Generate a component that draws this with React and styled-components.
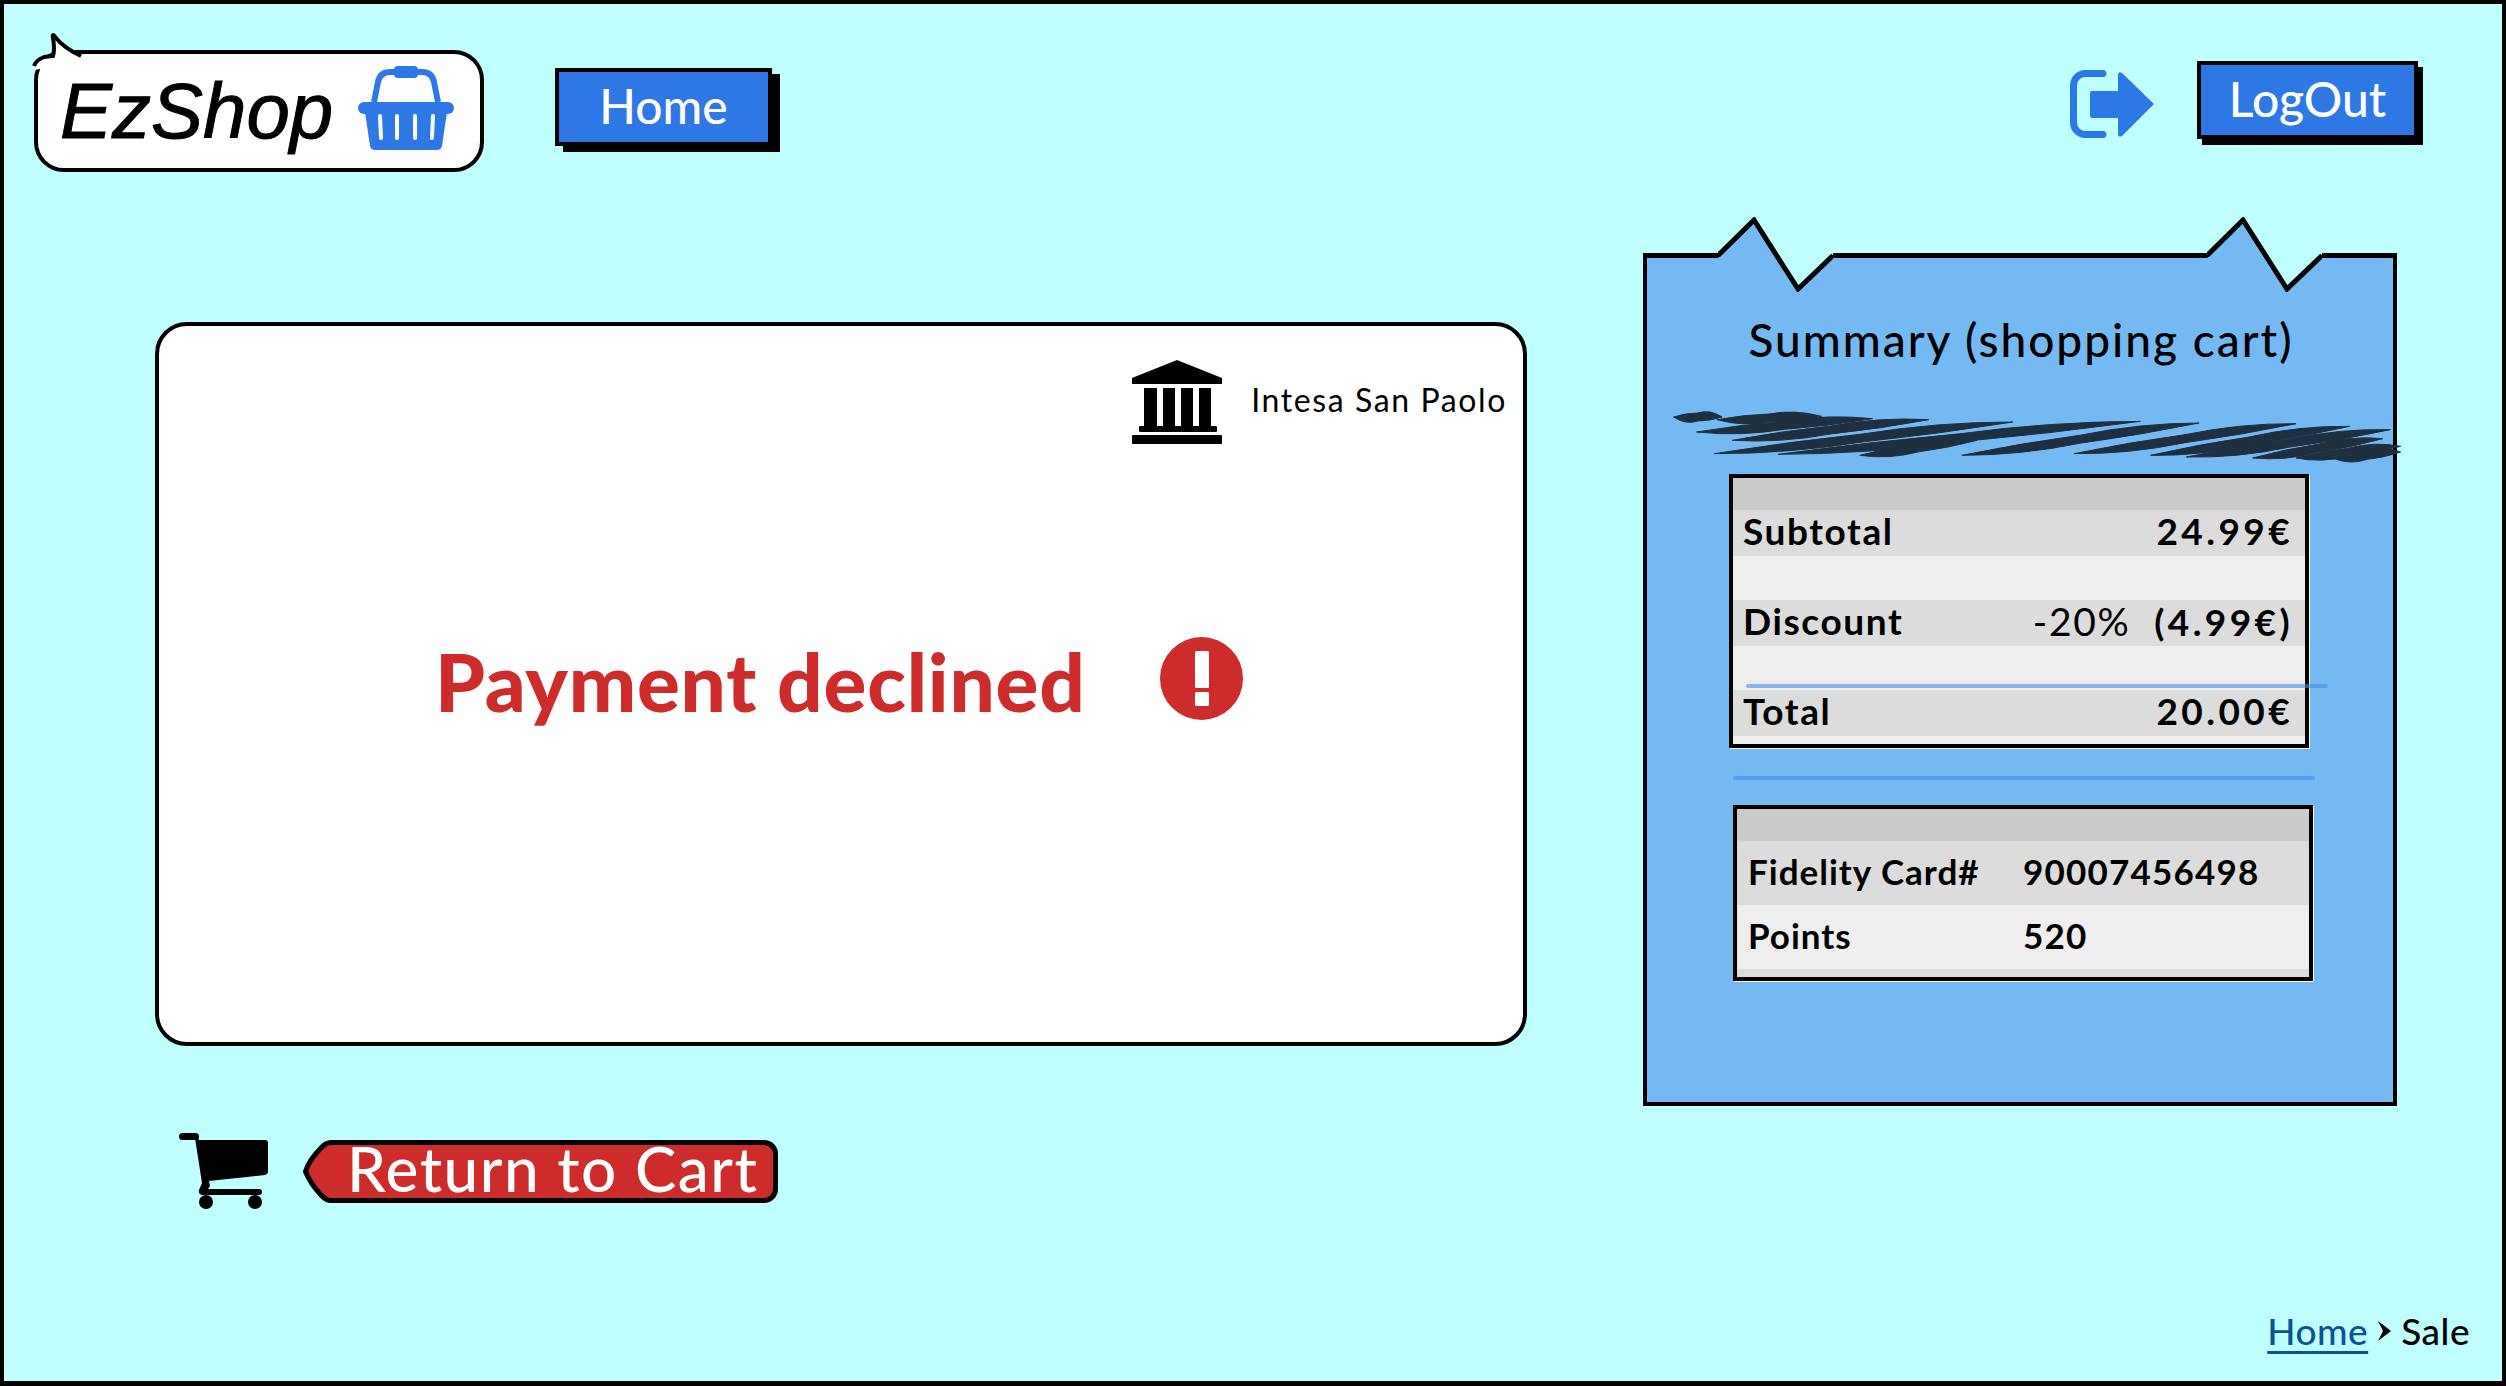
import React from "react";
import styled, { createGlobalStyle } from "styled-components";

const FONT = `Lato, "Noto Sans", sans-serif`;

const Global = createGlobalStyle`
  html, body { margin: 0; padding: 0; background: #fff; }
  body { font-family: ${FONT}; }
  * { box-sizing: border-box; }
`;

const Frame = styled.div`
  width: 2506px;
  height: 1386px;
  background: #bfffff;
  border: solid #000;
  border-width: 4px 4px 5px 4px;
  display: flex;
  flex-direction: column;
  color: #000;
`;

const TopBar = styled.header`
  display: flex;
  align-items: flex-start;
  padding: 46px 84px 0 30px;
`;

const LogoBubble = styled.div`
  position: relative;
  width: 450px;
  height: 122px;
  background: #fff;
  border: 4px solid #000;
  border-radius: 30px;
  display: flex;
  align-items: flex-start;
  padding: 12px 0 0 22px;
`;

const LogoTail = styled.svg`
  position: absolute;
  left: -6px;
  top: -24px;
`;

const LogoText = styled.span`
  font-family: "Liberation Sans", Arial, sans-serif;
  font-style: italic;
  font-size: 78px;
  line-height: 90px;
  width: 298px;
  -webkit-text-stroke: 1px #000;
`;

const BlockButton = styled.button`
  font-family: ${FONT};
  width: ${(p) => p.$w}px;
  height: ${(p) => p.$h}px;
  margin-top: ${(p) => p.$top}px;
  margin-left: ${(p) => p.$left}px;
  background: #2d78e4;
  color: #fff;
  font-size: 48px;
  font-weight: 500;
  line-height: 1;
  border: 4px solid #000;
  box-shadow: ${(p) => p.$shadow}px 6px 0 #000;
  padding: 0 0 3px;
`;

const Spacer = styled.div`
  flex: 1;
`;

const LogoutIcon = styled.svg`
  margin-top: 20px;
  margin-right: 43px;
`;

const Content = styled.main`
  display: flex;
  align-items: flex-start;
  gap: 116px;
  padding-left: 151px;
  margin-top: 81px;
`;

const LeftColumn = styled.section`
  padding-top: 69px;
  display: flex;
  flex-direction: column;
`;

const Card = styled.div`
  width: 1372px;
  height: 724px;
  background: #fff;
  border: 4px solid #000;
  border-radius: 32px;
  display: flex;
  flex-direction: column;
`;

const BankRow = styled.div`
  align-self: flex-end;
  display: flex;
  align-items: center;
  gap: 28px;
  margin: 34px 16px 0 0;
`;

const BankName = styled.span`
  font-size: 32px;
  letter-spacing: 1.6px;
  margin-top: -6px;
  white-space: nowrap;
`;

const Declined = styled.div`
  display: flex;
  align-items: center;
  gap: 74px;
  margin: 190px 0 0 276px;
`;

const DeclinedText = styled.h1`
  margin: 0;
  padding-top: 6px;
  font-size: 80px;
  line-height: 83px;
  font-weight: 900;
  letter-spacing: 0.8px;
  color: #ce2b2b;
  white-space: nowrap;
`;

const ReturnRow = styled.div`
  display: flex;
  align-items: flex-start;
  gap: 35px;
  margin: 87px 0 0 24px;
`;

const ReturnButton = styled.button`
  display: flex;
  height: 63px;
  margin-top: 7px;
  padding: 0;
  background: none;
  border: 0;
  font-family: ${FONT};
`;

const ReturnLabel = styled.span`
  width: 443px;
  height: 63px;
  background: #ce2b2b;
  border: solid #000;
  border-width: 5px 5px 5px 0;
  border-radius: 0 14px 14px 0;
  color: #fff;
  font-size: 62px;
  font-weight: 500;
  letter-spacing: 1.5px;
  line-height: 46px;
  padding-left: 12px;
  text-align: left;
  white-space: nowrap;
`;

const SummaryPanel = styled.aside`
  position: relative;
  width: 754px;
  height: 853px;
  background: #74b9f2;
  border: 4px solid #000;
  border-top-width: 5px;
  display: flex;
  flex-direction: column;
`;

const Notch = styled.svg`
  position: absolute;
  left: ${(p) => p.$left}px;
  top: -41px;
`;

const SummaryTitle = styled.h2`
  margin: 52px 0 0;
  padding-left: 2px;
  text-align: center;
  font-size: 46px;
  line-height: 60px;
  font-weight: 500;
  letter-spacing: 2px;
`;

const Scribble = styled.svg`
  display: block;
  margin: 43px 0 0 24px;
  width: 732px;
  height: 48px;
  overflow: visible;
  flex: none;
`;

const InfoTable = styled.div`
  position: relative;
  width: 580px;
  margin-left: ${(p) => p.$left}px;
  margin-top: ${(p) => p.$top}px;
  border: 4px solid #000;
  box-shadow: 1px 1px 0 #fff;
  display: flex;
  flex-direction: column;
  flex: none;
`;

const TONES = { head: "#cbcbcb", dark: "#dcdcdc", light: "#eeeeee" };

const Row = styled.div`
  height: ${(p) => p.$h}px;
  background: ${(p) => TONES[p.$tone]};
  display: flex;
  align-items: center;
  justify-content: ${(p) => (p.$columns ? "flex-start" : "space-between")};
  padding: ${(p) => (p.$columns ? "0 0 4px 11px" : "0 12px 5px 10px")};
  font-size: 37px;
  font-weight: 700;
  letter-spacing: 1.6px;
  white-space: nowrap;
`;

const Money = styled.span`
  letter-spacing: 3.4px;
`;

const Amount = styled.span`
  display: flex;
  align-items: baseline;
  gap: 24px;
`;

const Percent = styled.span`
  font-weight: 400;
  font-size: 39px;
`;

const CardLabel = styled.span`
  width: 275px;
  font-size: 35px;
  letter-spacing: 1px;
`;

const CardValue = styled.span`
  font-size: 35px;
  letter-spacing: 1.2px;
`;

const PenLine = styled.div`
  height: 4px;
  background: rgba(70, 140, 235, 0.6);
  border-radius: 2px;
`;

const OverLine = styled(PenLine)`
  position: absolute;
  left: 13px;
  top: 206px;
  width: 582px;
`;

const Divider = styled(PenLine)`
  flex: none;
  width: 582px;
  margin: 28px 0 0 86px;
`;

const Breadcrumb = styled.nav`
  margin-top: auto;
  align-self: flex-end;
  display: flex;
  align-items: center;
  gap: 10px;
  padding: 0 32px 28px 0;
  font-size: 37px;
  line-height: 44px;
  font-weight: 500;
  letter-spacing: 0.5px;
`;

const Crumb = styled.a`
  color: #0b5394;
  text-decoration: underline;
  text-underline-offset: 6px;
`;

const Basket = () => (
  <svg width="96" height="84" viewBox="0 0 96 84" fill="none">
    <path d="M16 36 L20 16 Q22 6 32 6 H64 Q74 6 76 16 L80 36" stroke="#2d78e4" strokeWidth="6" />
    <rect x="36" y="0" width="24" height="12" rx="4" fill="#2d78e4" />
    <rect x="0" y="36" width="96" height="12" rx="6" fill="#2d78e4" />
    <path d="M7 46 H89 L84 80 Q83 84 79 84 H17 Q13 84 12 80 Z" fill="#2d78e4" />
    {[[22, 23], [39, 39], [57, 57], [75, 74]].map(([a, b]) => (
      <path key={a} d={`M${a} 50 L${b} 72`} stroke="#fff" strokeWidth="4" strokeLinecap="round" />
    ))}
  </svg>
);

const LogoutGlyph = () => (
  <LogoutIcon width="84" height="68" viewBox="0 0 84 68" fill="#2d78e4">
    <path d="M33 3.5 H16 A12 12 0 0 0 3.5 15.5 V52.5 A12 12 0 0 0 16 64.5 H33" fill="none" stroke="#2d78e4" strokeWidth="7" strokeLinecap="round" />
    <path d="M22 21 H48 V5 Q48 1 52 3 L84 34 L52 66 Q48 68 48 64 V48 H22 Q20 48 20 46 V23 Q20 21 22 21 Z" />
  </LogoutIcon>
);

const BankIcon = () => (
  <svg width="91" height="84" viewBox="0 0 91 84" fill="#000">
    <path d="M45 0 L90 18 V24 H0 V18 Z" />
    <rect x="12" y="28" width="13" height="38" />
    <rect x="31" y="28" width="12" height="38" />
    <rect x="49" y="28" width="12" height="38" />
    <rect x="67" y="28" width="12" height="38" />
    <rect x="7" y="66" width="78" height="6" rx="1" />
    <rect x="0" y="75" width="90" height="9" rx="1" />
  </svg>
);

const AlertIcon = () => (
  <svg width="83" height="83" viewBox="0 0 83 83">
    <circle cx="41.5" cy="41.5" r="41.5" fill="#ce2b2b" />
    <rect x="35" y="14" width="14" height="37" rx="1.5" fill="#fff" />
    <rect x="35" y="55" width="14" height="14" rx="1.5" fill="#fff" />
  </svg>
);

const CartIcon = () => (
  <svg width="89" height="77" viewBox="0 0 89 77" fill="#000">
    <rect x="0" y="0" width="20" height="7" rx="3.5" />
    <path d="M16 5 H19 L20 7 H86 Q89 7 89 10 V39 Q89 41 86 42 L30 48 L31 53 L29 56 H80 Q83 56 83 59 Q83 62 80 62 H24 Q19 62 20 57 L23 50 Z" />
    <ellipse cx="27" cy="69" rx="7" ry="7" />
    <ellipse cx="76" cy="69" rx="7" ry="7" />
  </svg>
);

const ArrowHead = () => (
  <svg width="32" height="63" viewBox="0 0 32 63">
    <path d="M32 2.5 H28 Q23 2.5 18 8 Q6 20 2.5 31.5 Q7 43 18 55 Q23 60.5 28 60.5 H32 Z" fill="#ce2b2b" />
    <path d="M32 2.5 H28 Q23 2.5 18 8 Q6 20 2.5 31.5 Q7 43 18 55 Q23 60.5 28 60.5 H32" fill="none" stroke="#000" strokeWidth="5" />
  </svg>
);

const NotchMark = ({ left }) => (
  <Notch $left={left} width="115" height="75" viewBox="0 0 115 75">
    <path d="M56 35 H115 V38 L80 72 Z" fill="#bfffff" />
    <path d="M0 41 L36 3 L60 41 Z" fill="#74b9f2" />
    <path d="M0 38.5 L36 3 L80 72 L115 38.5" fill="none" stroke="#000" strokeWidth="5" strokeLinejoin="miter" />
  </Notch>
);

const SCRIBBLE_STROKES = [
  [105, 680, 200, 680], [190, 688, 395, 678], [150, 725, 495, 685], [220, 750, 605, 688],
  [185, 790, 770, 695], [310, 792, 1020, 693], [470, 795, 700, 750], [670, 795, 1135, 698],
  [890, 790, 1325, 700], [1040, 795, 1430, 708], [1110, 800, 1510, 718], [1240, 803, 1495, 745],
  [1325, 803, 1530, 768], [1400, 805, 1530, 785],
];

const lens = ([x1, y1, x2, y2]) => {
  const ax = (x1 - 100) / 1.96;
  const ay = (y1 - 668) / 3;
  const bx = (x2 - 100) / 1.96;
  const by = (y2 - 668) / 3;
  const mx = (ax + bx) / 2;
  const my = (ay + by) / 2;
  const t = 8;
  return `M${ax} ${ay} Q${(ax + mx) / 2} ${(ay + my) / 2 + t} ${mx} ${my + t / 2} Q${(mx + bx) / 2} ${(my + by) / 2 + t / 2} ${bx} ${by} Q${(mx + bx) / 2} ${(my + by) / 2 - t} ${mx} ${my - t / 2} Q${(ax + mx) / 2} ${(ay + my) / 2 - t / 2} ${ax} ${ay} Z`;
};

const ScribbleMark = () => (
  <Scribble viewBox="0 0 732 48">
    {SCRIBBLE_STROKES.map((s) => (
      <path key={s.join("-")} d={lens(s)} fill="#1e2f3f" stroke="#1e2f3f" strokeWidth="1" strokeLinejoin="round" />
    ))}
  </Scribble>
);

export default function App() {
  return (
    <>
      <Global />
      <Frame>
        <TopBar>
          <LogoBubble>
            <LogoTail width="60" height="40" viewBox="0 0 60 40">
              <path d="M2 36 Q4 30 12 27 L21 26 Q23 20 21 8 Q20 2 24 8 Q32 18 50 27 L50 32 L2 40 Z" fill="#fff" />
              <path d="M2 36 Q4 30 12 27 L21 26 Q23 20 21 8 Q20 2 24 8 Q32 18 49 26" fill="none" stroke="#000" strokeWidth="4" />
            </LogoTail>
            <LogoText>EzShop</LogoText>
            <Basket />
          </LogoBubble>
          <BlockButton $w={217} $h={78} $top={18} $left={71} $shadow={8}>Home</BlockButton>
          <Spacer />
          <LogoutGlyph />
          <BlockButton $w={221} $h={78} $top={11} $left={0} $shadow={5}>LogOut</BlockButton>
        </TopBar>
        <Content>
          <LeftColumn>
            <Card>
              <BankRow>
                <BankIcon />
                <BankName>Intesa San Paolo</BankName>
              </BankRow>
              <Declined>
                <DeclinedText>Payment declined</DeclinedText>
                <AlertIcon />
              </Declined>
            </Card>
            <ReturnRow>
              <CartIcon />
              <ReturnButton>
                <ArrowHead />
                <ReturnLabel>Return to Cart</ReturnLabel>
              </ReturnButton>
            </ReturnRow>
          </LeftColumn>
          <SummaryPanel>
            <NotchMark left={71} />
            <NotchMark left={560} />
            <SummaryTitle>Summary (shopping cart)</SummaryTitle>
            <ScribbleMark />
            <InfoTable $left={82} $top={13}>
              <Row $tone="head" $h={32} />
              <Row $tone="dark" $h={46}>Subtotal<Money>24.99€</Money></Row>
              <Row $tone="light" $h={44} />
              <Row $tone="dark" $h={46}>
                Discount
                <Amount><Percent>-20%</Percent><Money>(4.99€)</Money></Amount>
              </Row>
              <Row $tone="light" $h={44} />
              <Row $tone="dark" $h={46}>Total<Money>20.00€</Money></Row>
              <Row $tone="light" $h={8} />
              <OverLine />
            </InfoTable>
            <Divider />
            <InfoTable $left={86} $top={25}>
              <Row $tone="head" $h={32} />
              <Row $tone="dark" $h={64} $columns><CardLabel>Fidelity Card#</CardLabel><CardValue>90007456498</CardValue></Row>
              <Row $tone="light" $h={64} $columns><CardLabel>Points</CardLabel><CardValue>520</CardValue></Row>
              <Row $tone="dark" $h={8} />
            </InfoTable>
          </SummaryPanel>
        </Content>
        <Breadcrumb>
          <Crumb>Home</Crumb>
          <svg width="13" height="20" viewBox="0 0 13 20"><path d="M0 0 L13 10 L0 20 L5 10 Z" fill="#000" /></svg>
          <span>Sale</span>
        </Breadcrumb>
      </Frame>
    </>
  );
}
